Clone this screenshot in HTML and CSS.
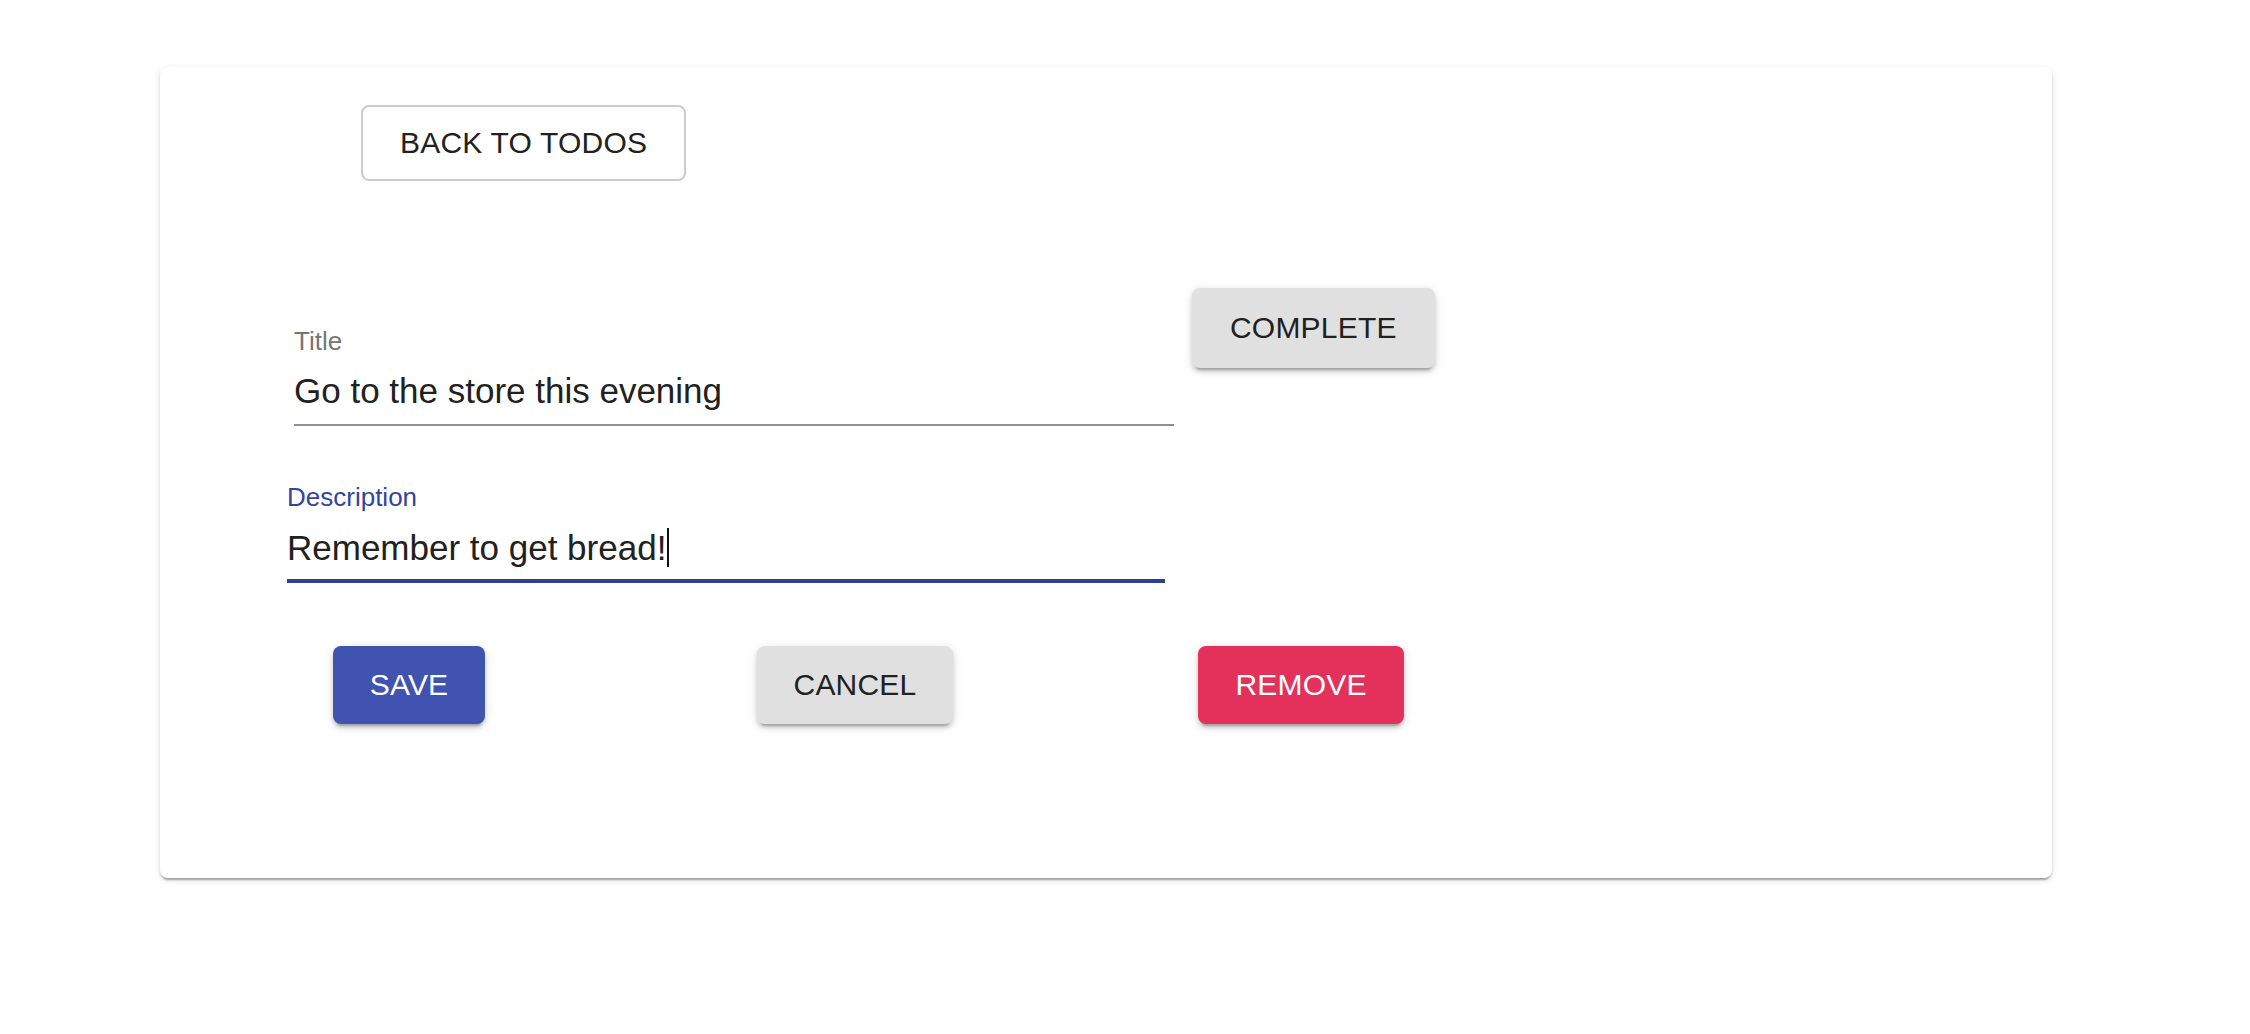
FILE: index.html
```html
<!DOCTYPE html>
<html lang="en">
<head>
<meta charset="utf-8">
<title>Edit Todo</title>
<link rel="stylesheet" href="styles.css">
</head>
<body>
  <div class="card">
    <div class="back-row">
      <button class="btn btn-outlined" type="button">BACK TO TODOS</button>
    </div>
    <div class="title-row">
      <div class="field field-title">
        <div class="field-label">Title</div>
        <div class="field-input">Go to the store this evening</div>
      </div>
      <button class="btn btn-contained btn-grey btn-complete" type="button">COMPLETE</button>
    </div>
    <div class="field field-desc is-focused">
      <div class="field-label">Description</div>
      <div class="field-input">Remember to get bread!<span class="caret"></span></div>
    </div>
    <div class="actions">
      <div class="action-cell"><button class="btn btn-contained btn-primary" type="button">SAVE</button></div>
      <div class="action-cell"><button class="btn btn-contained btn-grey" type="button">CANCEL</button></div>
      <div class="action-cell"><button class="btn btn-contained btn-danger" type="button">REMOVE</button></div>
    </div>
  </div>
</body>
</html>
```

FILE: styles.css
```css
* {
  box-sizing: border-box;
}

html, body {
  margin: 0;
  padding: 0;
  background: #ffffff;
}

body {
  font-family: "Liberation Sans", Arial, Helvetica, sans-serif;
  color: #212121;
  width: 2250px;
  height: 1034px;
  overflow: hidden;
}

.card {
  margin: 67px 0 0 160px;
  width: 1892px;
  height: 811px;
  padding-top: 38px;
  background: #ffffff;
  border-radius: 8px;
  box-shadow:
    0 4px 2px -2px rgba(0, 0, 0, 0.2),
    0 2px 2px 0 rgba(0, 0, 0, 0.14),
    0 2px 7px 0 rgba(0, 0, 0, 0.12);
}

/* Buttons */
.btn {
  display: inline-flex;
  align-items: center;
  justify-content: center;
  font-family: "Liberation Sans", Arial, Helvetica, sans-serif;
  font-size: 30px;
  letter-spacing: 0.2px;
  font-weight: 400;
  line-height: 1;
  padding: 0 37px 1px;
  border: none;
  border-radius: 8px;
  cursor: pointer;
  white-space: nowrap;
}

.btn-outlined {
  height: 76px;
  background: #ffffff;
  color: #212121;
  border: 2px solid #cccccc;
}

.btn-contained {
  height: 78px;
  box-shadow:
    0 6px 2px -4px rgba(0, 0, 0, 0.2),
    0 4px 4px 0 rgba(0, 0, 0, 0.14),
    0 2px 11px 0 rgba(0, 0, 0, 0.12);
}

.btn-grey {
  background: #e0e0e0;
  color: #212121;
}

.btn-primary {
  background: #4053b1;
  color: #ffffff;
}

.btn-danger {
  background: #e3315c;
  color: #ffffff;
}

.back-row {
  padding-left: 201px;
}

/* Title row */
.title-row {
  display: flex;
  align-items: flex-start;
  margin-top: 107px;
  padding-left: 134px;
}

.btn-complete {
  height: 80px;
  margin-left: 18px;
  padding: 0 38px 1px;
}

/* Text fields */
.field-label {
  font-size: 26px;
  line-height: 30px;
  color: #767676;
}

.field-input {
  font-size: 35px;
  line-height: 44px;
  color: #212121;
  white-space: nowrap;
}

.field-title {
  width: 880px;
  margin-top: 38px;
}

.field-title .field-input {
  margin-top: 13px;
  padding-bottom: 11px;
  border-bottom: 2px solid #8f8f8f;
}

.field-desc {
  width: 878px;
  margin: 56px 0 0 127px;
}

.field-desc .field-label {
  color: #33449d;
}

.field-desc .field-input {
  margin-top: 14px;
  padding-bottom: 9px;
  border-bottom: 4px solid #2f3f96;
}

.caret {
  display: inline-block;
  width: 2px;
  height: 39px;
  margin-left: 1px;
  vertical-align: -7px;
  background: #111111;
}

/* Actions */
.actions {
  display: grid;
  grid-template-columns: repeat(3, 446px);
  justify-items: center;
  margin-top: 63px;
  padding-left: 26px;
}

.action-cell {
  display: flex;
  justify-content: center;
}
```
